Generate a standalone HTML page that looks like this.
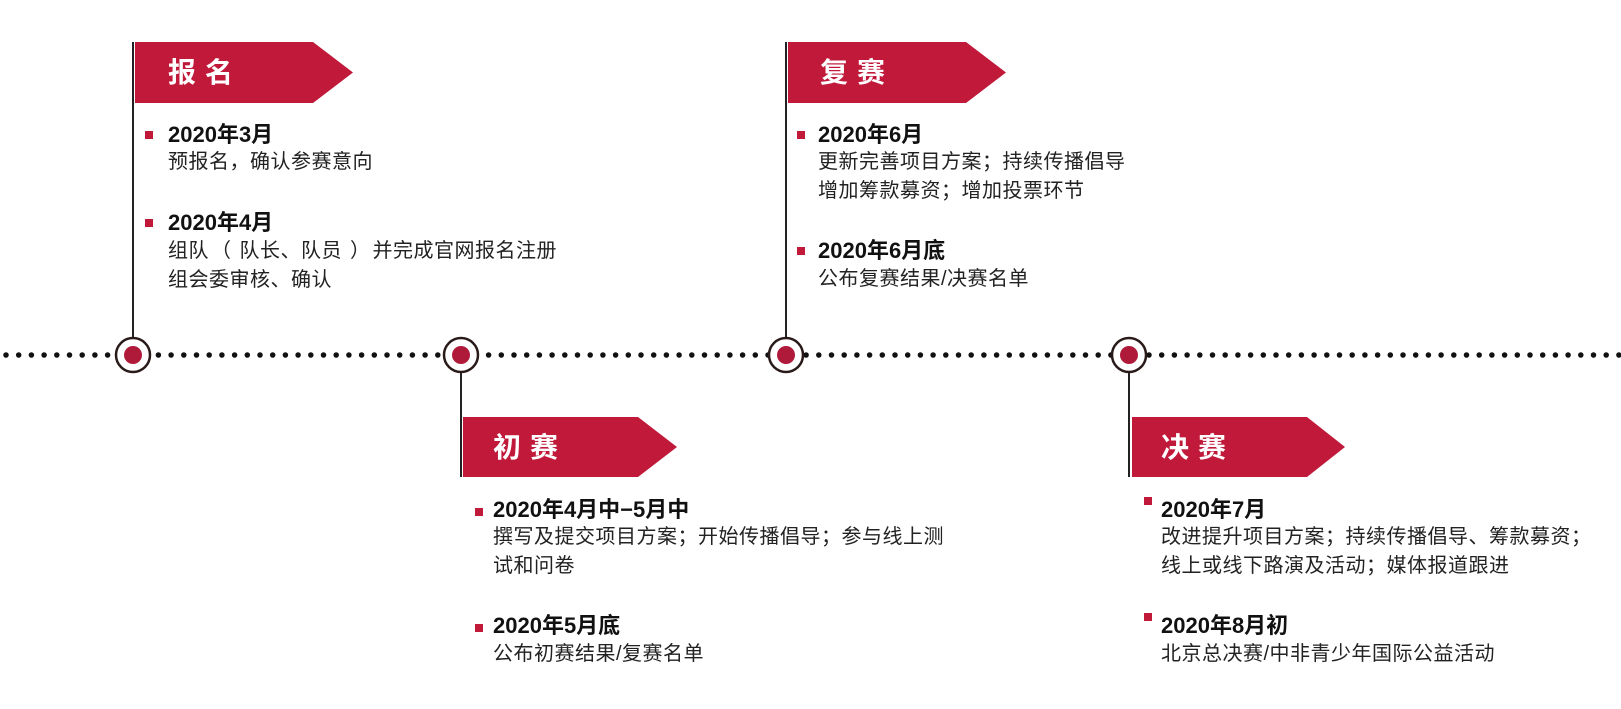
<!DOCTYPE html>
<html><head><meta charset="utf-8"><style>
body{margin:0;width:1621px;height:709px;background:#fff;position:relative;overflow:hidden;font-family:"Liberation Sans","Noto Sans CJK SC",sans-serif;color:#111}
.a{position:absolute}
.t{position:absolute;font-size:22px;font-weight:bold;line-height:26px;white-space:nowrap}
.b{position:absolute;font-size:20px;letter-spacing:0.5px;line-height:29px;white-space:nowrap;color:#222}
.sq{position:absolute;width:8px;height:8px;background:#c0193a}
.bn{position:absolute;color:#fff;font-size:28px;font-weight:bold;letter-spacing:9px;line-height:61px}
.po{display:inline-block;margin:0 8px 0 2px}
.pc{display:inline-block;margin:0 2px 0 8px}
</style></head><body>
<svg class="a" style="left:0;top:0" width="1621" height="709">
<line x1="6" y1="355" x2="1621" y2="355" stroke="#111" stroke-width="5.5" stroke-linecap="round" stroke-dasharray="0 12.7"/>
<g fill="#c0193a">
<polygon points="135,42 313,42 353,72.5 313,103 135,103"/>
<polygon points="788,42 966,42 1006,72.5 966,103 788,103"/>
<polygon points="463,417 638,417 677,447 638,477 463,477"/>
<polygon points="1132,417 1307,417 1345,447 1307,477 1132,477"/>
</g>
<g stroke="#222" stroke-width="2">
<line x1="133" y1="42" x2="133" y2="338"/>
<line x1="786" y1="42" x2="786" y2="338"/>
<line x1="461" y1="372" x2="461" y2="477"/>
<line x1="1129" y1="372" x2="1129" y2="477"/>
</g>
<g fill="#fff" stroke="#2a1a1a" stroke-width="2.5">
<circle cx="133" cy="355" r="17"/><circle cx="461" cy="355" r="17"/><circle cx="786" cy="355" r="17"/><circle cx="1129" cy="355" r="17"/>
</g>
<g fill="#b01a3a">
<circle cx="133" cy="355" r="9"/><circle cx="461" cy="355" r="9"/><circle cx="786" cy="355" r="9"/><circle cx="1129" cy="355" r="9"/>
</g>
</svg>
<div class="bn" style="left:168px;top:42px">报名</div>
<div class="bn" style="left:820px;top:42px">复赛</div>
<div class="bn" style="left:493px;top:417px">初赛</div>
<div class="bn" style="left:1161px;top:417px">决赛</div>

<div class="sq" style="left:145px;top:131px"></div>
<div class="t" style="left:168px;top:122px">2020年3月</div>
<div class="b" style="left:168px;top:148px">预报名，确认参赛意向</div>
<div class="sq" style="left:145px;top:219px"></div>
<div class="t" style="left:168px;top:210px">2020年4月</div>
<div class="b" style="left:168px;top:237px">组队<span class="po">（</span>队长、队员<span class="pc">）</span>并完成官网报名注册<br>组会委审核、确认</div>

<div class="sq" style="left:797px;top:131px"></div>
<div class="t" style="left:818px;top:122px">2020年6月</div>
<div class="b" style="left:818px;top:148px">更新完善项目方案；持续传播倡导<br>增加筹款募资；增加投票环节</div>
<div class="sq" style="left:797px;top:247px"></div>
<div class="t" style="left:818px;top:238px">2020年6月底</div>
<div class="b" style="left:818px;top:265px">公布复赛结果/决赛名单</div>

<div class="sq" style="left:475px;top:508px"></div>
<div class="t" style="left:493px;top:497px">2020年4月中−5月中</div>
<div class="b" style="left:493px;top:523px">撰写及提交项目方案；开始传播倡导；参与线上测<br>试和问卷</div>
<div class="sq" style="left:475px;top:624px"></div>
<div class="t" style="left:493px;top:613px">2020年5月底</div>
<div class="b" style="left:493px;top:640px">公布初赛结果/复赛名单</div>

<div class="sq" style="left:1144px;top:497px"></div>
<div class="t" style="left:1161px;top:497px">2020年7月</div>
<div class="b" style="left:1161px;top:523px">改进提升项目方案；持续传播倡导、筹款募资；<br>线上或线下路演及活动；媒体报道跟进</div>
<div class="sq" style="left:1144px;top:613px"></div>
<div class="t" style="left:1161px;top:613px">2020年8月初</div>
<div class="b" style="left:1161px;top:640px">北京总决赛/中非青少年国际公益活动</div>
</body></html>
